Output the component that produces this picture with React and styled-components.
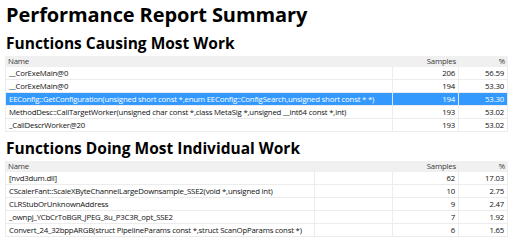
import React from "react";
import styled, { createGlobalStyle } from "styled-components";

const Global = createGlobalStyle`
  html, body { margin: 0; padding: 0; background: #fff; }
  body { font-family: "Open Sans", "Noto Sans", sans-serif; color: #1a1a1a; }
`;

const Page = styled.div`
  width: 512px;
  height: 249px;
  overflow: hidden;
  padding: 0 4px 0 5px;
  box-sizing: border-box;
`;

const Title = styled.h1`
  margin: 0;
  padding: 1px 0 0 1px;
  font-size: 20px;
  line-height: 28px;
  font-weight: 700;
  color: #000;
  letter-spacing: -0.1px;
`;

const Heading = styled.h2`
  margin: 0;
  padding: 3px 0 0 1px;
  font-size: 15.5px;
  line-height: 22px;
  font-weight: 700;
  color: #000;
`;

const Table = styled.div`
  display: grid;
  grid-template-columns: ${(p) => p.$cols};
  width: 503px;
  font-size: 7.8px;
  letter-spacing: -0.2px;
  margin-top: 2px;
  margin-bottom: ${(p) => p.$mb || 0}px;
`;

const HeadCell = styled.div`
  background: #f0f0f0;
  color: #3a3a3a;
  height: 11px;
  line-height: 11px;
  padding: 0 3px;
  text-align: ${(p) => (p.$right ? "right" : "left")};
  white-space: nowrap;
  overflow: hidden;
`;

const Cell = styled.div`
  height: 12px;
  line-height: 12px;
  padding: 0 3px 0 3px;
  border-bottom: 1px solid #ececec;
  border-right: 1px solid #ececec;
  background: ${(p) => (p.$sel ? "#3399ff" : "#fff")};
  color: ${(p) => (p.$sel ? "#fff" : "#111")};
  text-align: ${(p) => (p.$right ? "right" : "left")};
  white-space: nowrap;
  overflow: visible;
  position: relative;
  z-index: ${(p) => (p.$first ? 1 : 0)};
  ${(p) => p.$sel && "border-right-color: #dbe8f7;"}
  ${(p) => p.$first && "border-left: 1px solid #ececec;"}
`;

const top = [
  ["__CorExeMain@0", "206", "56.59"],
  ["__CorExeMain@0", "194", "53.30"],
  [
    "EEConfig::GetConfiguration(unsigned short const *,enum EEConfig::ConfigSearch,unsigned short const * *)",
    "194",
    "53.30",
    true,
  ],
  ["MethodDesc::CallTargetWorker(unsigned char const *,class MetaSig *,unsigned __int64 const *,int)", "193", "53.02"],
  ["_CallDescrWorker@20", "193", "53.02"],
];

const individual = [
  ["[nvd3dum.dll]", "62", "17.03"],
  ["CScalerFant::ScaleXByteChannelLargeDownsample_SSE2(void *,unsigned int)", "10", "2.75"],
  ["CLRStubOrUnknownAddress", "9", "2.47"],
  ["_ownpj_YCbCrToBGR_JPEG_8u_P3C3R_opt_SSE2", "7", "1.92"],
  ["Convert_24_32bppARGB(struct PipelineParams const *,struct ScanOpParams const *)", "6", "1.65"],
];

export default function App() {
  return (
    <Page>
      <Global />
      <Title>Performance Report Summary</Title>
      <Heading>Functions Causing Most Work</Heading>
      <Table $cols="388px 66px 49px" $mb={2}>
        <HeadCell>Name</HeadCell>
        <HeadCell $right>Samples</HeadCell>
        <HeadCell $right>%</HeadCell>
        {top.map(([n, s, p, sel], i) => (
          <React.Fragment key={i}>
            <Cell $sel={sel} $first>{n}</Cell>
            <Cell $sel={sel} $right>{s}</Cell>
            <Cell $sel={sel} $right>{p}</Cell>
          </React.Fragment>
        ))}
      </Table>
      <Heading>Functions Doing Most Individual Work</Heading>
      <Table $cols="310px 78px 66px 49px">
        <HeadCell>Name</HeadCell>
        <HeadCell />
        <HeadCell $right>Samples</HeadCell>
        <HeadCell $right>%</HeadCell>
        {individual.map(([n, s, p], i) => (
          <React.Fragment key={i}>
            <Cell $first>{n}</Cell>
            <Cell />
            <Cell $right>{s}</Cell>
            <Cell $right>{p}</Cell>
          </React.Fragment>
        ))}
      </Table>
    </Page>
  );
}
